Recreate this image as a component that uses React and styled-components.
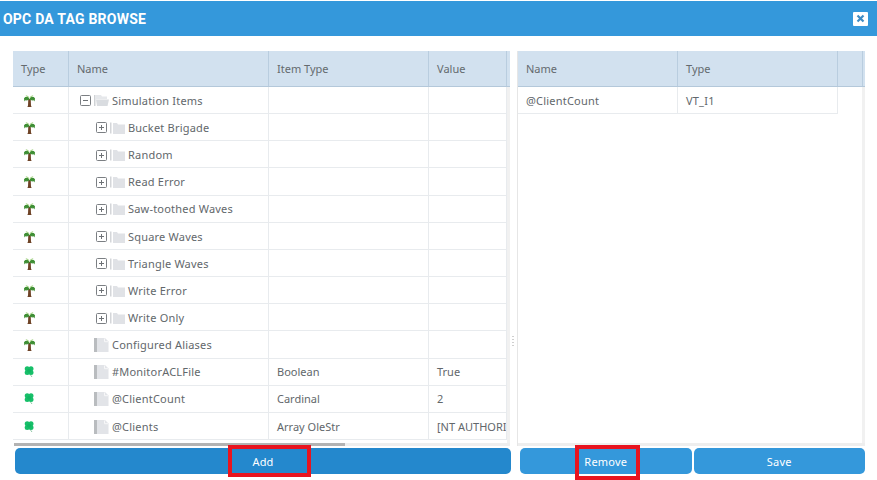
import React from "react";
import styled, { createGlobalStyle } from "styled-components";

const GlobalStyle = createGlobalStyle`
  html, body {
    margin: 0;
    padding: 0;
    background: #fff;
  }
  * {
    box-sizing: border-box;
  }
`;

const Dialog = styled.div`
  width: 877px;
  height: 480px;
  overflow: hidden;
  padding-top: 1px;
  display: flex;
  flex-direction: column;
  background: #fff;
  font-family: "Noto Sans", "Open Sans", sans-serif;
  font-size: 11px;
  letter-spacing: 0.2px;
  color: #62676b;
`;

const TitleBar = styled.div`
  height: 35px;
  flex: none;
  background: #3498db;
  display: flex;
  align-items: center;
  justify-content: space-between;
  padding: 0 9px 0 3px;
`;

const Title = styled.span`
  font-family: Roboto, sans-serif;
  font-weight: 700;
  font-size: 14px;
  letter-spacing: 0.22px;
  color: #fff;
`;

const CloseButton = styled.span`
  width: 15px;
  height: 14px;
  background: #fff;
  border-radius: 1px;
  display: flex;
  align-items: center;
  justify-content: center;
`;

const Body = styled.div`
  display: flex;
  padding: 15px 12px 0 13px;
`;

const Panel = styled.div`
  width: ${(p) => p.$width}px;
  height: 395px;
  flex: none;
  display: flex;
  flex-direction: column;
`;

const Splitter = styled.div`
  width: 8px;
  flex: none;
  height: 395px;
  display: flex;
  align-items: center;
  justify-content: center;
  padding: 184px 2px 0 0;
  background: linear-gradient(to right, #fff 0 7px, #e6e6e6 7px);
`;

const Grip = styled.div`
  width: 2px;
  height: 12px;
  background-image: radial-gradient(#cfcfcf 50%, transparent 50%);
  background-size: 2px 3px;
`;

const HeaderRow = styled.div`
  height: 36px;
  flex: none;
  display: flex;
  background: #d2e1ef;
  border-bottom: 1px solid #b4c8da;
  color: #646a6e;
  letter-spacing: 0;
`;

const HeadCell = styled.div`
  width: ${(p) => p.$width}px;
  flex: none;
  display: flex;
  align-items: center;
  padding-left: 8px;
  border-right: 1px solid #b9cddf;
`;

const HeadFill = styled.div`
  flex: 1;
`;

const Rows = styled.div`
  flex: 1;
  min-height: 0;
  display: flex;
  background: #fff;
`;

const RowList = styled.div`
  width: ${(p) => p.$width}px;
  flex: none;
`;

const Row = styled.div`
  height: 27.17px;
  display: flex;
  border-bottom: 1px solid #e8ebee;
`;

const Cell = styled.div`
  width: ${(p) => p.$width}px;
  flex: none;
  overflow: hidden;
  white-space: nowrap;
  padding: 7.75px 0 0 ${(p) => p.$pad ?? 8}px;
  border-right: 1px solid #e8ebee;
`;

const DataCell = styled(Cell)`
  letter-spacing: 0;
`;

const CellContent = styled.div`
  height: 12px;
  line-height: 12px;
  display: flex;
  align-items: center;
`;

const ScrollGutter = styled.div`
  flex: none;
  width: ${(p) => p.$width}px;
  margin-left: auto;
  background: #f1f1f1;
`;

const HScroll = styled.div`
  height: 3px;
  flex: none;
  margin-left: 1px;
  background: linear-gradient(to right, #b3b3b3 0 331px, #eeeeee 331px);
`;

const RightEdge = styled.div`
  height: 3px;
  flex: none;
  background: #eeeeee;
`;

const Expander = styled.svg`
  width: 11px;
  height: 11px;
  flex: none;
  margin-right: 3px;
`;

const NodeIcon = styled.svg`
  width: 15px;
  height: 14px;
  flex: none;
  margin-right: 3px;
`;

const ButtonBar = styled.div`
  display: flex;
  padding: 2px 12px 0 15px;
`;

const LeftButtons = styled.div`
  width: 496px;
  flex: none;
  margin-right: 9px;
  display: flex;
`;

const RightButtons = styled.div`
  flex: 1;
  display: flex;
  gap: 2px;
`;

const Button = styled.div`
  position: relative;
  flex: 1;
  height: 26px;
  padding-top: 1px;
  border-radius: 5px;
  background: ${(p) => p.$color};
  color: #fff;
  display: flex;
  align-items: center;
  justify-content: center;
`;

const Highlight = styled.div`
  position: absolute;
  border: 4px solid #e8141f;
  left: ${(p) => p.$left}px;
  top: -3px;
  width: ${(p) => p.$width}px;
  height: ${(p) => p.$height}px;
`;

const Palm = () => (
  <svg width="11" height="12" viewBox="0 0 11 12">
    <path d="M4.300 4h2.400l.3 6.500.6 1.500H3.400l.6-1.500z" fill="#6e4326" />
    <path d="M5.500 4.200C4.300 1.400 1.900 1 0 3.200l.3 3.300 1-1.500.8 1 .8-1.300.9.800z" fill="#3f8f35" />
    <path d="M5.500 4.200c1.200-2.800 3.600-3.200 5.500-1l-.3 3.300-1-1.500-.8 1-.8-1.300-.9.800z" fill="#3f8f35" />
    <path d="M5.500 3.600C4.800 1.500 3.400.3 1.600.7c1.500.4 2.600 1.200 3.900 2.900C6.800 1.900 7.900 1.100 9.400.7 7.600.3 6.200 1.500 5.500 3.600z" fill="#86c45a" />
  </svg>
);

const Clover = () => (
  <svg width="11" height="12" viewBox="0 0 11 12">
    <path d="M6.500 8.500c.2 1.100.7 1.800 1.600 2.500" stroke="#8fc9a5" fill="none" />
    <circle cx="3.200" cy="2.800" r="2.500" fill="#17bf69" />
    <circle cx="7" cy="2.800" r="2.500" fill="#17bf69" />
    <circle cx="3.200" cy="6.600" r="2.500" fill="#17bf69" />
    <circle cx="7" cy="6.600" r="2.500" fill="#17bf69" />
    <circle cx="5.100" cy="4.700" r="2" fill="#12b563" />
  </svg>
);

const Box = ({ open }) => (
  <Expander viewBox="0 0 11 11">
    <rect x="0.500" y="0.500" width="10" height="10" rx="1" fill="#fff" stroke="#7b7f83" />
    <path d="M3 5.500h5" stroke="#6e7276" />
    {!open && <path d="M5.500 3v5" stroke="#6e7276" />}
  </Expander>
);

const Folder = () => (
  <NodeIcon viewBox="0 0 15 14">
    <rect x="0" y="1.500" width="1.500" height="11" fill="#d4d6d9" />
    <path d="M3 2h4l1 1.500h7V13H3z" fill="#e0e2e6" />
  </NodeIcon>
);

const OpenFolder = () => (
  <NodeIcon viewBox="0 0 15 14">
    <path d="M0 1h1.500v11H0z" fill="#cfd2d5" />
    <path d="M2 1h5l1 1.500h5V5H2z" fill="#e6e8eb" />
    <path d="M2 5.500h13l-1.500 6.500H3z" fill="#d9dce0" />
  </NodeIcon>
);

const FileIcon = () => (
  <NodeIcon viewBox="0 0 15 14">
    <rect x="0" y="0" width="3" height="14" fill="#b9bcbf" />
    <path d="M3 0h8l3.500 3.500V14H3z" fill="#e2e4e8" />
    <path d="M10.500 0.500v3.200h3.500" stroke="#f7f7f8" fill="none" />
  </NodeIcon>
);

const leftCols = [56, 200, 160, 78];
const rightCols = [160, 160];

const tagRows = [
  { kind: "palm", node: "minus", pad: 11, name: "Simulation Items" },
  { kind: "palm", node: "plus", pad: 27, name: "Bucket Brigade" },
  { kind: "palm", node: "plus", pad: 27, name: "Random" },
  { kind: "palm", node: "plus", pad: 27, name: "Read Error" },
  { kind: "palm", node: "plus", pad: 27, name: "Saw-toothed Waves" },
  { kind: "palm", node: "plus", pad: 27, name: "Square Waves" },
  { kind: "palm", node: "plus", pad: 27, name: "Triangle Waves" },
  { kind: "palm", node: "plus", pad: 27, name: "Write Error" },
  { kind: "palm", node: "plus", pad: 27, name: "Write Only" },
  { kind: "palm", node: "file", pad: 25, name: "Configured Aliases" },
  { kind: "clover", node: "file", pad: 25, name: "#MonitorACLFile", type: "Boolean", value: "True" },
  { kind: "clover", node: "file", pad: 25, name: "@ClientCount", type: "Cardinal", value: "2" },
  { kind: "clover", node: "file", pad: 25, name: "@Clients", type: "Array OleStr", value: "[NT AUTHORITY" },
];

const NodeGlyphs = ({ node }) => {
  if (node === "minus") {
    return (
      <>
        <Box open />
        <OpenFolder />
      </>
    );
  }
  if (node === "plus") {
    return (
      <>
        <Box />
        <Folder />
      </>
    );
  }
  return <FileIcon />;
};

export default function App() {
  return (
    <>
      <GlobalStyle />
      <Dialog>
        <TitleBar>
          <Title>OPC DA TAG BROWSE</Title>
          <CloseButton>
            <svg width="9" height="9" viewBox="0 0 9 9">
              <path d="M1.500 1.500l6 6M7.500 1.500l-6 6" stroke="#3f8cc4" strokeWidth="2.200" />
            </svg>
          </CloseButton>
        </TitleBar>
        <Body>
          <Panel $width={497}>
            <HeaderRow>
              <HeadCell $width={leftCols[0]}>Type</HeadCell>
              <HeadCell $width={leftCols[1]}>Name</HeadCell>
              <HeadCell $width={leftCols[2]}>Item Type</HeadCell>
              <HeadCell $width={leftCols[3]}>Value</HeadCell>
              <HeadFill />
            </HeaderRow>
            <Rows>
              <RowList $width={494}>
                {tagRows.map((row) => (
                  <Row key={row.name}>
                    <Cell $width={leftCols[0]} $pad={11}>
                      <CellContent>{row.kind === "palm" ? <Palm /> : <Clover />}</CellContent>
                    </Cell>
                    <Cell $width={leftCols[1]} $pad={row.pad}>
                      <CellContent>
                        <NodeGlyphs node={row.node} />
                        {row.name}
                      </CellContent>
                    </Cell>
                    <DataCell $width={leftCols[2]}>
                      <CellContent>{row.type}</CellContent>
                    </DataCell>
                    <DataCell $width={leftCols[3]}>
                      <CellContent>{row.value}</CellContent>
                    </DataCell>
                  </Row>
                ))}
              </RowList>
              <ScrollGutter $width={3} />
            </Rows>
            <HScroll />
          </Panel>
          <Splitter>
            <Grip />
          </Splitter>
          <Panel $width={347}>
            <HeaderRow>
              <HeadCell $width={rightCols[0]}>Name</HeadCell>
              <HeadCell $width={rightCols[1]}>Type</HeadCell>
              <HeadCell $width={25} />
              <HeadFill />
            </HeaderRow>
            <Rows>
              <RowList $width={320}>
                <Row>
                  <Cell $width={rightCols[0]}>
                    <CellContent>@ClientCount</CellContent>
                  </Cell>
                  <Cell $width={rightCols[1]}>
                    <CellContent>VT_I1</CellContent>
                  </Cell>
                </Row>
              </RowList>
              <ScrollGutter $width={3} />
            </Rows>
            <RightEdge />
          </Panel>
        </Body>
        <ButtonBar>
          <LeftButtons>
            <Button $color="#2488cd">
              Add
              <Highlight $left={213} $width={83} $height={32} />
            </Button>
          </LeftButtons>
          <RightButtons>
            <Button $color="#3498db">
              Remove
              <Highlight $left={55} $width={65} $height={35} />
            </Button>
            <Button $color="#3498db">Save</Button>
          </RightButtons>
        </ButtonBar>
      </Dialog>
    </>
  );
}
